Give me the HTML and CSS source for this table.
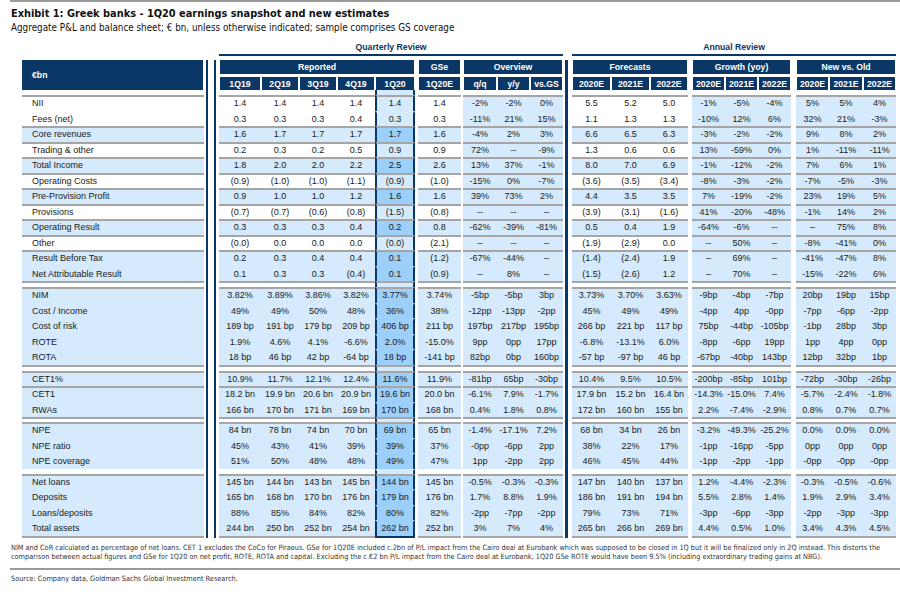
FILE: index.html
```html
<!DOCTYPE html>
<html lang="en">
<head>
<meta charset="utf-8">
<title>Exhibit 1: Greek banks - 1Q20 earnings snapshot</title>
<link rel="stylesheet" href="styles.css">
</head>
<body>
<div class="exhibit">
  <header class="ex-head">
    <h1 class="ex-title">Exhibit 1: Greek banks - 1Q20 earnings snapshot and new estimates</h1>
    <p class="ex-sub">Aggregate P&amp;L and balance sheet; € bn, unless otherwise indicated; sample comprises GS coverage</p>
  </header>

  <table class="snap">
    <colgroup>
      <col class="c-label">
      <col class="c-dl">
      <col class="c-q1">
      <col class="c-q">
      <col class="c-q">
      <col class="c-q">
      <col class="c-cur">
      <col class="c-s3">
      <col class="c-gse">
      <col class="c-s2">
      <col class="c-o1 blue">
      <col class="c-o blue">
      <col class="c-o blue">
      <col class="c-nv">
      <col class="c-f">
      <col class="c-f">
      <col class="c-f2">
      <col class="c-s4">
      <col class="c-o blue">
      <col class="c-o blue">
      <col class="c-o blue">
      <col class="c-s5">
      <col class="c-o blue">
      <col class="c-o1 blue">
      <col class="c-o blue">
    </colgroup>
    <thead>
      <tr class="h0">
        <td colspan="2"></td>
        <td colspan="11" class="review">Quarterly Review</td>
        <td></td>
        <td colspan="11" class="review">Annual Review</td>
      </tr>
      <tr class="h1">
        <th rowspan="2" class="unit">€bn</th>
        <td class="dl"></td>
        <th colspan="5">Reported</th>
        <td class="gp"></td>
        <th>GSe</th>
        <td class="gp"></td>
        <th colspan="3">Overview</th>
        <td class="nv"></td>
        <th colspan="3">Forecasts</th>
        <td class="gp"></td>
        <th colspan="3">Growth (yoy)</th>
        <td class="gp"></td>
        <th colspan="3">New vs. Old</th>
      </tr>
      <tr class="h2">
        <td class="dl"></td>
        <th>1Q19</th><th>2Q19</th><th>3Q19</th><th>4Q19</th><th>1Q20</th>
        <td class="gp"></td>
        <th>1Q20E</th>
        <td class="gp"></td>
        <th>q/q</th><th>y/y</th><th>vs.GS</th>
        <td class="nv"></td>
        <th>2020E</th><th>2021E</th><th>2022E</th>
        <td class="gp"></td>
        <th>2020E</th><th>2021E</th><th>2022E</th>
        <td class="gp"></td>
        <th>2020E</th><th>2021E</th><th>2022E</th>
      </tr>
      <tr class="h3">
        <td></td><td class="dl"></td><td colspan="4"></td><td class="q"></td><td colspan="6"></td><td class="nv"></td><td colspan="11"></td>
      </tr>
    </thead>
    <tbody>
      <tr class="ln"><td>NII</td><td class="dl"></td><td>1.4</td><td>1.4</td><td>1.4</td><td>1.4</td><td class="q">1.4</td><td class="gp"></td><td>1.4</td><td class="gp"></td><td>-2%</td><td>-2%</td><td>0%</td><td class="nv"></td><td>5.5</td><td>5.2</td><td>5.0</td><td class="gp"></td><td>-1%</td><td>-5%</td><td>-4%</td><td class="gp"></td><td>5%</td><td>5%</td><td>4%</td></tr>
      <tr><td>Fees (net)</td><td class="dl"></td><td>0.3</td><td>0.3</td><td>0.3</td><td>0.4</td><td class="q">0.3</td><td class="gp"></td><td>0.3</td><td class="gp"></td><td>-11%</td><td>21%</td><td>15%</td><td class="nv"></td><td>1.1</td><td>1.3</td><td>1.3</td><td class="gp"></td><td>-10%</td><td>12%</td><td>6%</td><td class="gp"></td><td>32%</td><td>21%</td><td>-3%</td></tr>
      <tr class="ln b"><td>Core revenues</td><td class="dl"></td><td>1.6</td><td>1.7</td><td>1.7</td><td>1.7</td><td class="q">1.7</td><td class="gp"></td><td>1.6</td><td class="gp"></td><td>-4%</td><td>2%</td><td>3%</td><td class="nv"></td><td>6.6</td><td>6.5</td><td>6.3</td><td class="gp"></td><td>-3%</td><td>-2%</td><td>-2%</td><td class="gp"></td><td>9%</td><td>8%</td><td>2%</td></tr>
      <tr class="ln"><td>Trading &amp; other</td><td class="dl"></td><td>0.2</td><td>0.3</td><td>0.2</td><td>0.5</td><td class="q">0.9</td><td class="gp"></td><td>0.9</td><td class="gp"></td><td>72%</td><td>--</td><td>-9%</td><td class="nv"></td><td>1.3</td><td>0.6</td><td>0.6</td><td class="gp"></td><td>13%</td><td>-59%</td><td>0%</td><td class="gp"></td><td>1%</td><td>-11%</td><td>-11%</td></tr>
      <tr class="ln b"><td>Total Income</td><td class="dl"></td><td>1.8</td><td>2.0</td><td>2.0</td><td>2.2</td><td class="q">2.5</td><td class="gp"></td><td>2.6</td><td class="gp"></td><td>13%</td><td>37%</td><td>-1%</td><td class="nv"></td><td>8.0</td><td>7.0</td><td>6.9</td><td class="gp"></td><td>-1%</td><td>-12%</td><td>-2%</td><td class="gp"></td><td>7%</td><td>6%</td><td>1%</td></tr>
      <tr class="ln"><td>Operating Costs</td><td class="dl"></td><td>(0.9)</td><td>(1.0)</td><td>(1.0)</td><td>(1.1)</td><td class="q">(0.9)</td><td class="gp"></td><td>(1.0)</td><td class="gp"></td><td>-15%</td><td>0%</td><td>-7%</td><td class="nv"></td><td>(3.6)</td><td>(3.5)</td><td>(3.4)</td><td class="gp"></td><td>-8%</td><td>-3%</td><td>-2%</td><td class="gp"></td><td>-7%</td><td>-5%</td><td>-3%</td></tr>
      <tr class="ln b"><td>Pre-Provision Profit</td><td class="dl"></td><td>0.9</td><td>1.0</td><td>1.0</td><td>1.2</td><td class="q">1.6</td><td class="gp"></td><td>1.6</td><td class="gp"></td><td>39%</td><td>73%</td><td>2%</td><td class="nv"></td><td>4.4</td><td>3.5</td><td>3.5</td><td class="gp"></td><td>7%</td><td>-19%</td><td>-2%</td><td class="gp"></td><td>23%</td><td>19%</td><td>5%</td></tr>
      <tr class="ln"><td>Provisions</td><td class="dl"></td><td>(0.7)</td><td>(0.7)</td><td>(0.6)</td><td>(0.8)</td><td class="q">(1.5)</td><td class="gp"></td><td>(0.8)</td><td class="gp"></td><td>--</td><td>--</td><td>–</td><td class="nv"></td><td>(3.9)</td><td>(3.1)</td><td>(1.6)</td><td class="gp"></td><td>41%</td><td>-20%</td><td>-48%</td><td class="gp"></td><td>-1%</td><td>14%</td><td>2%</td></tr>
      <tr class="ln b"><td>Operating Result</td><td class="dl"></td><td>0.3</td><td>0.3</td><td>0.3</td><td>0.4</td><td class="q">0.2</td><td class="gp"></td><td>0.8</td><td class="gp"></td><td>-62%</td><td>-39%</td><td>-81%</td><td class="nv"></td><td>0.5</td><td>0.4</td><td>1.9</td><td class="gp"></td><td>-64%</td><td>-6%</td><td>--</td><td class="gp"></td><td>–</td><td>75%</td><td>8%</td></tr>
      <tr class="ln"><td>Other</td><td class="dl"></td><td>(0.0)</td><td>0.0</td><td>0.0</td><td>0.0</td><td class="q">(0.0)</td><td class="gp"></td><td>(2.1)</td><td class="gp"></td><td>–</td><td>--</td><td>–</td><td class="nv"></td><td>(1.9)</td><td>(2.9)</td><td>0.0</td><td class="gp"></td><td>--</td><td>50%</td><td>–</td><td class="gp"></td><td>-8%</td><td>-41%</td><td>0%</td></tr>
      <tr class="ln b"><td>Result Before Tax</td><td class="dl"></td><td>0.2</td><td>0.3</td><td>0.4</td><td>0.4</td><td class="q">0.1</td><td class="gp"></td><td>(1.2)</td><td class="gp"></td><td>-67%</td><td>-44%</td><td>–</td><td class="nv"></td><td>(1.4)</td><td>(2.4)</td><td>1.9</td><td class="gp"></td><td>–</td><td>69%</td><td>–</td><td class="gp"></td><td>-41%</td><td>-47%</td><td>8%</td></tr>
      <tr class="b"><td>Net Attributable Result</td><td class="dl"></td><td>0.1</td><td>0.3</td><td>0.3</td><td>(0.4)</td><td class="q">0.1</td><td class="gp"></td><td>(0.9)</td><td class="gp"></td><td>–</td><td>8%</td><td>–</td><td class="nv"></td><td>(1.5)</td><td>(2.6)</td><td>1.2</td><td class="gp"></td><td>–</td><td>70%</td><td>–</td><td class="gp"></td><td>-15%</td><td>-22%</td><td>6%</td></tr>

      <tr class="d wide"><td></td><td class="dl"></td><td colspan="4"></td><td class="q"></td><td class="gp"></td><td></td><td class="gp"></td><td colspan="3"></td><td class="nv"></td><td colspan="3"></td><td class="gp"></td><td colspan="3"></td><td class="gp"></td><td colspan="3"></td></tr>

      <tr class="ln b"><td>NIM</td><td class="dl"></td><td>3.82%</td><td>3.89%</td><td>3.86%</td><td>3.82%</td><td class="q">3.77%</td><td class="gp"></td><td>3.74%</td><td class="gp"></td><td>-5bp</td><td>-5bp</td><td>3bp</td><td class="nv"></td><td>3.73%</td><td>3.70%</td><td>3.63%</td><td class="gp"></td><td>-9bp</td><td>-4bp</td><td>-7bp</td><td class="gp"></td><td>20bp</td><td>19bp</td><td>15bp</td></tr>
      <tr class="b"><td>Cost / Income</td><td class="dl"></td><td>49%</td><td>49%</td><td>50%</td><td>48%</td><td class="q">36%</td><td class="gp"></td><td>38%</td><td class="gp"></td><td>-12pp</td><td>-13pp</td><td>-2pp</td><td class="nv"></td><td>45%</td><td>49%</td><td>49%</td><td class="gp"></td><td>-4pp</td><td>4pp</td><td>-0pp</td><td class="gp"></td><td>-7pp</td><td>-6pp</td><td>-2pp</td></tr>
      <tr class="b"><td>Cost of risk</td><td class="dl"></td><td>189 bp</td><td>191 bp</td><td>179 bp</td><td>209 bp</td><td class="q">406 bp</td><td class="gp"></td><td>211 bp</td><td class="gp"></td><td>197bp</td><td>217bp</td><td>195bp</td><td class="nv"></td><td>266 bp</td><td>221 bp</td><td>117 bp</td><td class="gp"></td><td>75bp</td><td>-44bp</td><td>-105bp</td><td class="gp"></td><td>-1bp</td><td>28bp</td><td>3bp</td></tr>
      <tr class="b"><td>ROTE</td><td class="dl"></td><td>1.9%</td><td>4.6%</td><td>4.1%</td><td>-6.6%</td><td class="q">2.0%</td><td class="gp"></td><td>-15.0%</td><td class="gp"></td><td>9pp</td><td>0pp</td><td>17pp</td><td class="nv"></td><td>-6.8%</td><td>-13.1%</td><td>6.0%</td><td class="gp"></td><td>-8pp</td><td>-6pp</td><td>19pp</td><td class="gp"></td><td>1pp</td><td>4pp</td><td>0pp</td></tr>
      <tr class="b"><td>ROTA</td><td class="dl"></td><td>18 bp</td><td>46 bp</td><td>42 bp</td><td>-64 bp</td><td class="q">18 bp</td><td class="gp"></td><td>-141 bp</td><td class="gp"></td><td>82bp</td><td>0bp</td><td>160bp</td><td class="nv"></td><td>-57 bp</td><td>-97 bp</td><td>46 bp</td><td class="gp"></td><td>-67bp</td><td>-40bp</td><td>143bp</td><td class="gp"></td><td>12bp</td><td>32bp</td><td>1bp</td></tr>

      <tr class="d wide"><td></td><td class="dl"></td><td colspan="4"></td><td class="q"></td><td class="gp"></td><td></td><td class="gp"></td><td colspan="3"></td><td class="nv"></td><td colspan="3"></td><td class="gp"></td><td colspan="3"></td><td class="gp"></td><td colspan="3"></td></tr>

      <tr class="ln b"><td>CET1%</td><td class="dl"></td><td>10.9%</td><td>11.7%</td><td>12.1%</td><td>12.4%</td><td class="q">11.6%</td><td class="gp"></td><td>11.9%</td><td class="gp"></td><td>-81bp</td><td>65bp</td><td>-30bp</td><td class="nv"></td><td>10.4%</td><td>9.5%</td><td>10.5%</td><td class="gp"></td><td>-200bp</td><td>-85bp</td><td>101bp</td><td class="gp"></td><td>-72bp</td><td>-30bp</td><td>-26bp</td></tr>
      <tr class="ln b"><td>CET1</td><td class="dl"></td><td>18.2 bn</td><td>19.9 bn</td><td>20.6 bn</td><td>20.9 bn</td><td class="q">19.6 bn</td><td class="gp"></td><td>20.0 bn</td><td class="gp"></td><td>-6.1%</td><td>7.9%</td><td>-1.7%</td><td class="nv"></td><td>17.9 bn</td><td>15.2 bn</td><td>16.4 bn</td><td class="gp"></td><td>-14.3%</td><td>-15.0%</td><td>7.4%</td><td class="gp"></td><td>-5.7%</td><td>-2.4%</td><td>-1.8%</td></tr>
      <tr class="b"><td>RWAs</td><td class="dl"></td><td>166 bn</td><td>170 bn</td><td>171 bn</td><td>169 bn</td><td class="q">170 bn</td><td class="gp"></td><td>168 bn</td><td class="gp"></td><td>0.4%</td><td>1.8%</td><td>0.8%</td><td class="nv"></td><td>172 bn</td><td>160 bn</td><td>155 bn</td><td class="gp"></td><td>2.2%</td><td>-7.4%</td><td>-2.9%</td><td class="gp"></td><td>0.8%</td><td>0.7%</td><td>0.7%</td></tr>

      <tr class="d"><td></td><td class="dl"></td><td colspan="4"></td><td class="q"></td><td class="gp"></td><td></td><td class="gp"></td><td colspan="3"></td><td class="nv"></td><td colspan="3"></td><td class="gp"></td><td colspan="3"></td><td class="gp"></td><td colspan="3"></td></tr>

      <tr class="ln b"><td>NPE</td><td class="dl"></td><td>84 bn</td><td>78 bn</td><td>74 bn</td><td>70 bn</td><td class="q">69 bn</td><td class="gp"></td><td>65 bn</td><td class="gp"></td><td>-1.4%</td><td>-17.1%</td><td>7.2%</td><td class="nv"></td><td>68 bn</td><td>34 bn</td><td>26 bn</td><td class="gp"></td><td>-3.2%</td><td>-49.3%</td><td>-25.2%</td><td class="gp"></td><td>0.0%</td><td>0.0%</td><td>0.0%</td></tr>
      <tr class="b"><td>NPE ratio</td><td class="dl"></td><td>45%</td><td>43%</td><td>41%</td><td>39%</td><td class="q">39%</td><td class="gp"></td><td>37%</td><td class="gp"></td><td>-0pp</td><td>-6pp</td><td>2pp</td><td class="nv"></td><td>38%</td><td>22%</td><td>17%</td><td class="gp"></td><td>-1pp</td><td>-16pp</td><td>-5pp</td><td class="gp"></td><td>0pp</td><td>0pp</td><td>0pp</td></tr>
      <tr class="b"><td>NPE coverage</td><td class="dl"></td><td>51%</td><td>50%</td><td>48%</td><td>48%</td><td class="q">49%</td><td class="gp"></td><td>47%</td><td class="gp"></td><td>1pp</td><td>-2pp</td><td>2pp</td><td class="nv"></td><td>46%</td><td>45%</td><td>44%</td><td class="gp"></td><td>-1pp</td><td>-2pp</td><td>-1pp</td><td class="gp"></td><td>-0pp</td><td>-0pp</td><td>-0pp</td></tr>

      <tr class="d open"><td></td><td class="dl"></td><td colspan="4"></td><td class="q"></td><td class="gp"></td><td></td><td class="gp"></td><td colspan="3"></td><td class="nv"></td><td colspan="3"></td><td class="gp"></td><td colspan="3"></td><td class="gp"></td><td colspan="3"></td></tr>

      <tr class="ln b"><td>Net loans</td><td class="dl"></td><td>145 bn</td><td>144 bn</td><td>143 bn</td><td>145 bn</td><td class="q">144 bn</td><td class="gp"></td><td>145 bn</td><td class="gp"></td><td>-0.5%</td><td>-0.3%</td><td>-0.3%</td><td class="nv"></td><td>147 bn</td><td>140 bn</td><td>137 bn</td><td class="gp"></td><td>1.2%</td><td>-4.4%</td><td>-2.3%</td><td class="gp"></td><td>-0.3%</td><td>-0.5%</td><td>-0.6%</td></tr>
      <tr class="b"><td>Deposits</td><td class="dl"></td><td>165 bn</td><td>168 bn</td><td>170 bn</td><td>176 bn</td><td class="q">179 bn</td><td class="gp"></td><td>176 bn</td><td class="gp"></td><td>1.7%</td><td>8.8%</td><td>1.9%</td><td class="nv"></td><td>186 bn</td><td>191 bn</td><td>194 bn</td><td class="gp"></td><td>5.5%</td><td>2.8%</td><td>1.4%</td><td class="gp"></td><td>1.9%</td><td>2.9%</td><td>3.4%</td></tr>
      <tr class="b"><td>Loans/deposits</td><td class="dl"></td><td>88%</td><td>85%</td><td>84%</td><td>82%</td><td class="q">80%</td><td class="gp"></td><td>82%</td><td class="gp"></td><td>-2pp</td><td>-7pp</td><td>-2pp</td><td class="nv"></td><td>79%</td><td>73%</td><td>71%</td><td class="gp"></td><td>-3pp</td><td>-6pp</td><td>-3pp</td><td class="gp"></td><td>-2pp</td><td>-3pp</td><td>-3pp</td></tr>
      <tr class="b end"><td>Total assets</td><td class="dl"></td><td>244 bn</td><td>250 bn</td><td>252 bn</td><td>254 bn</td><td class="q">262 bn</td><td class="gp"></td><td>252 bn</td><td class="gp"></td><td>3%</td><td>7%</td><td>4%</td><td class="nv"></td><td>265 bn</td><td>266 bn</td><td>269 bn</td><td class="gp"></td><td>4.4%</td><td>0.5%</td><td>1.0%</td><td class="gp"></td><td>3.4%</td><td>4.3%</td><td>4.5%</td></tr>
    </tbody>
  </table>

  <div class="notes">
    <p>NIM and CoR calculated as percentage of net loans. CET 1 excludes the CoCo for Piraeus. GSe for 1Q20E included c.2bn of P/L impact from the Cairo deal at Eurobank which was supposed to be closed in 1Q but it will be finalized only in 2Q instead. This distorts the</p>
    <p>comparison between actual figures and GSe for 1Q20 on net profit, ROTE, ROTA and capital. Excluding the c.€2 bn P/L impact from the Cairo deal at Eurobank, 1Q20 GSe ROTE would have been 9.5% (including extraordinary trading gains at NBG).</p>
  </div>
  <p class="source">Source: Company data, Goldman Sachs Global Investment Research.</p>
</div>
</body>
</html>
```

FILE: styles.css
```css
html, body {
  margin: 0;
  padding: 0;
  background: #fff;
}

body {
  width: 900px;
  font-family: "Liberation Sans", Arial, sans-serif;
  color: #1a1a1a;
}

.exhibit {
  padding-left: 10px;
}

.ex-head {
  border-top: 2px solid #9a9a9a;
}

.ex-title {
  margin: 5px 0 0 1px;
  font-family: "Liberation Sans Narrow", "DejaVu Sans Condensed", "Liberation Sans", sans-serif;
  font-size: 10.9px;
  line-height: 14px;
  font-weight: bold;
  color: #111;
}

.ex-sub {
  margin: 0 0 0 1px;
  font-family: "Liberation Sans Narrow", "DejaVu Sans Condensed", "Liberation Sans", sans-serif;
  font-size: 9.8px;
  line-height: 13px;
  color: #111;
}

/* ---------- table ---------- */
.snap {
  margin: 6px 0 0 12px;
  width: 874px;
  table-layout: fixed;
  border-collapse: separate;
  border-spacing: 0;
  font-family: "Liberation Sans", Arial, sans-serif;
  font-size: 9px;
  color: #1a1a1a;
}

.c-label { width: 182px; }
.c-dl { width: 15px; }
.c-q1 { width: 42px; }
.c-q { width: 38px; }
.c-cur { width: 40px; }
.c-s3 { width: 3px; }
.c-gse { width: 43px; }
.c-s2 { width: 2px; }
.c-o1 { width: 34px; }
.c-o { width: 33px; }
.c-nv { width: 9px; }
.c-f { width: 39px; }
.c-f2 { width: 38px; }
.c-s4 { width: 4px; }
.c-s5 { width: 5px; }

.snap col.blue { background: #d5eafc; }

.snap thead tr { background: #fff; }

.snap td,
.snap th {
  padding: 0;
  text-align: center;
  white-space: nowrap;
}

/* header */
.snap .review {
  height: 14px;
  border-bottom: 2px solid #0b3766;
  color: #0b3766;
  font-weight: bold;
  font-size: 8.7px;
}

.snap th {
  background: #0b3766;
  color: #fff;
  font-weight: bold;
  font-size: 8.7px;
  border-left: 1px solid #fff;
  border-right: 1px solid #fff;
}

.snap .h1 > th,
.snap .h1 > td {
  height: 14px;
  border-top: 4px solid #fff;
}

.snap .h2 > th,
.snap .h2 > td {
  height: 13px;
  border-top: 3px solid #fff;
}

.snap .h2 > td {
  border-top-color: transparent;
}

.snap th.unit {
  text-align: left;
  padding-left: 10px;
  border-left: 0;
}

.snap .h3 > td {
  height: 5px;
  font-size: 0;
  line-height: 0;
}

/* body */
.snap tbody td {
  height: 13.5px;
  line-height: 13.5px;
  border-top: 2px solid transparent;
}

.snap tbody td:first-child {
  text-align: left;
  padding-left: 10px;
}

.snap tbody tr.b {
  background: #d5eafc;
}

.snap tbody tr.ln td {
  border-top-color: #a5a5a5;
}

.snap tbody tr.d {
  background: #fff;
}

.snap tbody tr.d td {
  height: 3px;
  line-height: 0;
  font-size: 0;
  border-top-color: #a5a5a5;
}

.snap tbody tr.d.wide td {
  height: 4px;
}

.snap tbody tr.d.open td {
  border-top-color: transparent;
}

.snap tbody tr.end td {
  border-bottom: 2px solid #a5a5a5;
}

/* current quarter column */
.snap td.q {
  background: #d5eafc;
  border-left: 2px solid #0b3766;
  border-right: 2px solid #0b3766;
}

.snap tbody tr.b td.q {
  background: #9ccffa;
}

.snap tbody tr.d td.q {
  background: #d5eafc;
}

.snap tbody tr.end td.q {
  border-bottom-color: #0b3766;
}

/* gaps and vertical rules */
.snap tr td.gp,
.snap tr td.dl,
.snap tr td.nv {
  background-color: #fff;
}

.snap tbody tr td.gp,
.snap tbody tr td.dl,
.snap tbody tr td.nv {
  border-top-color: transparent;
  border-bottom-color: transparent;
}

.snap tr td.dl {
  background-image: linear-gradient(to right,
    #fff 0, #fff 2px,
    #0b3766 2px, #0b3766 4px,
    #fff 4px, #fff 10px,
    #0b3766 10px, #0b3766 12px,
    #fff 12px);
}

.snap tr td.nv {
  background-image: linear-gradient(to right,
    #fff 0, #fff 2px,
    #0b3766 2px, #0b3766 5px,
    #fff 5px);
}

.snap .h0 td {
  background: #fff;
}

/* notes */
.notes {
  margin-top: 5px;
  padding-bottom: 6px;
  border-bottom: 2px solid #9a9a9a;
  font-family: "Liberation Sans Narrow", "DejaVu Sans Condensed", "Liberation Sans", sans-serif;
  font-size: 7.3px;
  line-height: 9.5px;
  color: #333;
}

.notes p {
  margin: 0 0 0 1px;
  white-space: nowrap;
}

.source {
  margin: 4px 0 0 1px;
  font-family: "Liberation Sans Narrow", "DejaVu Sans Condensed", "Liberation Sans", sans-serif;
  font-size: 7.3px;
  line-height: 10px;
  color: #333;
}
```
